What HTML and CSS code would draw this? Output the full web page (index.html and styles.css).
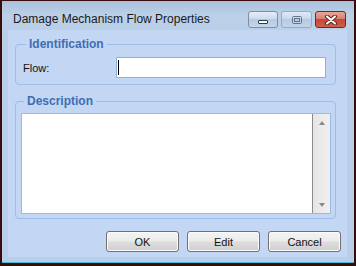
FILE: index.html
```html
<!DOCTYPE html>
<html>
<head>
<meta charset="utf-8">
<link rel="stylesheet" href="styles.css">
</head>
<body>
<div class="window">
  <div class="titlebar">
    <div class="title">Damage Mechanism Flow Properties</div>
    <div class="caption-buttons">
      <div class="cap cap-min">
        <svg width="12" height="6" viewBox="0 0 12 6"><rect x="1.5" y="1.5" width="9" height="3" rx="0.5" fill="#fff" stroke="#2c3a4e" stroke-width="1"/></svg>
      </div>
      <div class="cap cap-max">
        <svg width="12" height="10" viewBox="0 0 12 10"><rect x="1.5" y="1.5" width="9" height="7" rx="1" fill="none" stroke="#55657a" stroke-width="1"/><rect x="3.5" y="3.5" width="5" height="3" fill="none" stroke="#55657a" stroke-width="1"/></svg>
      </div>
      <div class="cap cap-close">
        <svg width="14" height="10" viewBox="0 0 14 10"><path d="M3 1.5 L11 8.5 M11 1.5 L3 8.5" stroke="#5a2a26" stroke-width="4" stroke-linecap="round"/><path d="M3 1.5 L11 8.5 M11 1.5 L3 8.5" stroke="#ffffff" stroke-width="2" stroke-linecap="round"/></svg>
      </div>
    </div>
  </div>
  <div class="body-row">
    <div class="client">
      <fieldset class="group group-id">
        <legend>Identification</legend>
        <div class="field-row">
          <span class="label">Flow:</span>
          <div class="textbox"><span class="caret"></span></div>
        </div>
      </fieldset>
      <fieldset class="group group-desc">
        <legend>Description</legend>
        <div class="memo">
          <div class="memo-text"></div>
          <div class="vscroll">
            <span class="arrow arrow-up"></span>
            <span class="arrow arrow-down"></span>
          </div>
        </div>
      </fieldset>
      <div class="button-row">
        <div class="btn">OK</div>
        <div class="btn">Edit</div>
        <div class="btn">Cancel</div>
      </div>
    </div>
  </div>
  <div class="bottom-line"></div>
</div>
</body>
</html>
```

FILE: styles.css
```css
* { box-sizing: border-box; }
html, body {
  margin: 0;
  padding: 0;
  background: #2a0606;
}
.window {
  width: 356px;
  height: 266px;
  border-top: 1px solid #3a0b0b;
  border-left: 2px solid #3a0b0b;
  border-right: 2px solid #3a0b0b;
  border-bottom: 3px solid #3a0b0b;
  background: linear-gradient(#a9c0dc 0px, #bcd0e8 14px, #b9cee8 40px, #b9cee8 100%);
  display: flex;
  flex-direction: column;
  font-family: "Liberation Sans", Arial, sans-serif;
}
.titlebar {
  height: 29px;
  display: flex;
  align-items: center;
  padding: 8px 8px 0 11px;
}
.title {
  flex: 1;
  font-size: 12px;
  color: #1a1a1a;
  white-space: nowrap;
  margin-top: -1px;
}
.caption-buttons {
  display: flex;
  gap: 3px;
}
.cap {
  height: 17px;
  border-radius: 3px;
  display: flex;
  align-items: center;
  justify-content: center;
}
.cap-min, .cap-max {
  width: 30px;
  border: 1px solid #7c8ea8;
  background: linear-gradient(#e6eef8 0%, #cddbed 45%, #b6c9e2 50%, #c4d6ec 100%);
}
.cap-min svg { margin-top: 5px; }
.cap-max {
  width: 31px;
  border-color: #93a4bc;
  opacity: 0.85;
}
.cap-close {
  width: 31px;
  border: 1px solid #6b2a22;
  background: linear-gradient(#e8a898 0%, #d9806d 45%, #c6463a 50%, #cf5f49 100%);
}
.body-row {
  flex: 1;
  display: flex;
  padding: 0 7px 0 6px;
}
.client {
  flex: 1;
  background: #c3d7f5;
  display: flex;
  flex-direction: column;
  padding: 7px 0 0 7px;
  font-size: 11px;
  color: #000;
}
.bottom-line {
  height: 6px;
  border-bottom: 1px solid #48bdd3;
}
.group {
  margin: 0;
  border: 1px solid #9ebde8;
  border-radius: 4px;
  min-inline-size: 0;
  width: 321px;
}
.group legend {
  font-size: 12px;
  font-weight: bold;
  color: #3f6db3;
  line-height: 14px;
  padding: 0 3px;
  margin-left: 3px;
}
.group-id {
  padding: 6px 9px 6px 7px;
}
.field-row {
  display: flex;
  align-items: center;
}
.label {
  width: 93px;
  font-size: 11px;
  color: #111;
}
.textbox {
  width: 210px;
  height: 21px;
  background: #fff;
  border: 1px solid #8fb0de;
  position: relative;
}
.caret {
  position: absolute;
  left: 1px;
  top: 2px;
  width: 1px;
  height: 15px;
  background: #000;
}
.group-desc {
  margin-top: 9px;
  padding: 5px 4px 4px 5px;
}
.memo {
  width: 310px;
  height: 101px;
  border: 1px solid #9ab9e4;
  background: #fff;
  display: flex;
}
.memo-text {
  flex: 1;
  border-right: 1px solid #8c8c8c;
}
.vscroll {
  width: 17px;
  background: linear-gradient(90deg, #e6e6e6, #f0f0f0);
  display: flex;
  flex-direction: column;
  justify-content: space-between;
  align-items: center;
  padding: 7px 0 6px;
}
.arrow {
  width: 0;
  height: 0;
  border-left: 3.5px solid transparent;
  border-right: 3.5px solid transparent;
}
.arrow-up { border-bottom: 4px solid #8a8a8a; }
.arrow-down { border-top: 4px solid #8a8a8a; }
.button-row {
  margin-top: 12px;
  display: flex;
  justify-content: flex-end;
  gap: 8px;
  padding-right: 6px;
}
.btn {
  width: 73px;
  height: 21px;
  border: 1px solid #707070;
  border-radius: 3px;
  background: linear-gradient(#f4f4f4 0%, #ebebeb 48%, #dddddd 52%, #d0d0d0 100%);
  box-shadow: inset 0 0 0 1px #fcfcfc;
  display: flex;
  align-items: center;
  justify-content: center;
  font-size: 11px;
  color: #111;
}
```
